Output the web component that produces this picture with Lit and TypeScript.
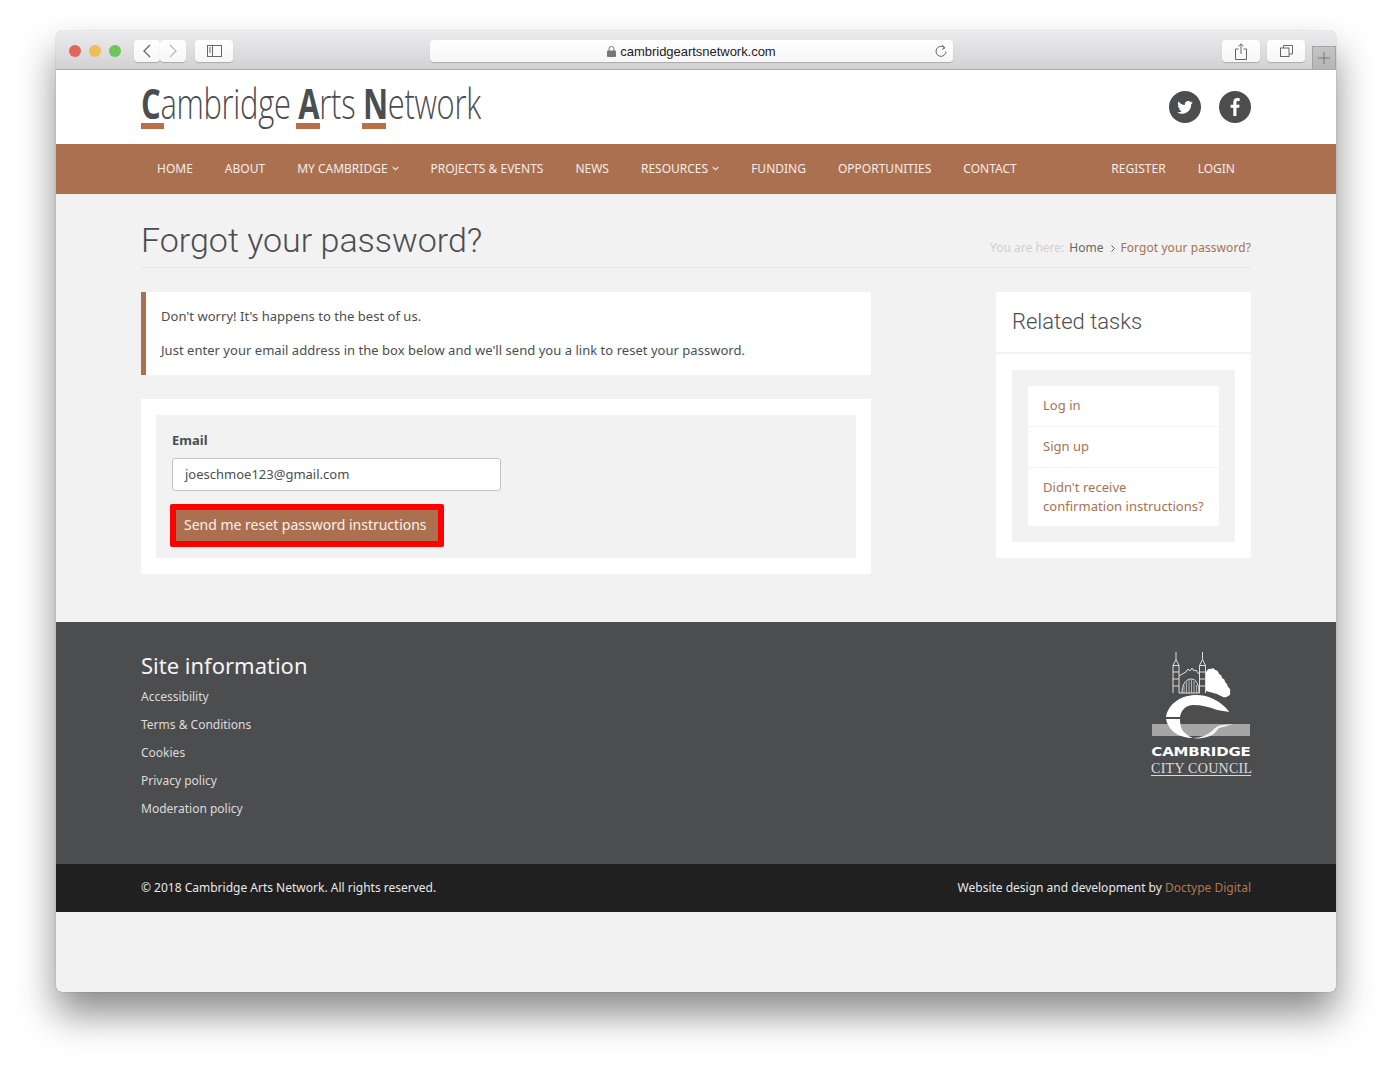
import { LitElement, html, css, svg } from "lit";
import { customElement } from "lit/decorators.js";

const logoMark = svg`
<svg class="council" width="100" height="124" viewBox="0 0 100 124">
  <g fill="none" stroke="#dedede" stroke-width="1">
    <path d="M22 41V13.500h6V41M48.500 41V13.500h6V41M22 13.500l3-6 3 6M48.500 13.500l3-6 3 6M25 7.500V0M51.500 7.500V0M22 20h6M22 27h6M22 34h6M48.500 20h6M48.500 27h6M48.500 34h6"/>
    <path d="M28 24l5-3 2-1 2-3 2 2 2-3 2 3 2-1 2 3 1.500 1M28 41h20.500"/>
    <path d="M31 41c0-8 3.500-14 9-14s8 6 8 14" />
    <path d="M33 41v-8M35.500 41v-11M38 41v-13M40.500 41v-13M43 41v-12M45.500 41v-8" stroke-width=".7"/>
  </g>
  <path fill="#fff" d="M55 20q2-4 5-3 3-2 4 1 3 0 4 4 3 1 3 4 3 1 3 4 3 2 3 5 3 2 2 5 1 3-2 4-2 2-5 1l-6-3-11-3z"/>
  <rect x="1" y="72" width="98" height="12" fill="#a6a6a6"/>
  <path fill="#fff" d="M78.300 60C70 49 58 43 45 43 30 43 17 52 15 65h14c1-7 6-12 13-12 9 0 17 2 24 5z"/>
  <path fill="#fff" d="M15 67h14c0 7 2 12 5 14 2 2 5 4 8 5C27 86 17 78 15 67z"/>
  <path fill="#f2f2f2" d="M42 86c8 0 14-3 19-7 3-4 7-6 11-6l10-1c-6 2-10 3-14 4-3 4-6 7-9 8-5 2-12 3-17 2z"/>
  <rect x="0" y="123" width="100" height="1" fill="#d8d8d8"/>
</svg>`;

@customElement("app-root")
export class AppRoot extends LitElement {
  static styles = css`
    :host { display: block; height: 1072px; box-sizing: border-box; padding: 31px 56px 80px; background: #fff; font-family: "Noto Sans", sans-serif; color: #4c4d4f; font-size: 13px; overflow: hidden; }
    * { box-sizing: border-box; }
    a { color: inherit; text-decoration: none; }
    .window { height: 961px; display: flex; flex-direction: column; background: #f2f2f2; border-radius: 6px; box-shadow: 0 22px 38px rgba(0,0,0,.46), 0 0 1px rgba(0,0,0,.5); }
    .bar { height: 39px; flex: none; display: flex; align-items: center; background: linear-gradient(#ececee, #d2d2d4); border-bottom: 1px solid #a9a9a9; border-radius: 6px 6px 0 0; padding: 2px 0 0 13px; position: relative; }
    .dots { display: flex; gap: 8px; width: 65px; }
    .dot { width: 12px; height: 12px; border-radius: 50%; }
    .btn { height: 22px; background: linear-gradient(#fff, #f6f6f6); border-radius: 4px; box-shadow: 0 1px 1px rgba(0,0,0,.2); display: flex; align-items: center; justify-content: center; }
    .nb { width: 26px; }
    .sb { width: 38px; margin-left: 9px; }
    .url { width: 523px; margin-left: 197px; position: relative; color: #222; font-size: 13px; gap: 4px; font-family: "Liberation Sans", sans-serif; letter-spacing: -.03px; }
    .url .reload { position: absolute; right: 5px; top: 4px; }
    .rightbtns { display: flex; gap: 7px; margin-left: 269px; }
    .rb { width: 38px; }
    .plus { position: absolute; right: 0; top: 15px; width: 24px; height: 23px; background: linear-gradient(#c4c4c6, #b5b5b7); border: 1px solid #a3a3a5; border-bottom: 0; display: flex; align-items: center; justify-content: center; }
    .wrap { width: 1110px; margin: 0 auto; }
    .head { height: 74px; flex: none; background: #fff; }
    .head .wrap { height: 100%; display: flex; justify-content: space-between; align-items: flex-start; }
    .logo { position: relative; height: 60px; width: 345px; margin-top: 7px; font-family: "Open Sans", sans-serif; font-weight: 300; font-size: 42px; line-height: 52px; color: #4c4d4f; white-space: nowrap; }
    .logo-text { display: inline-block; transform: scaleX(.736); transform-origin: 0 0; letter-spacing: -.4px; }
    .logo b { font-weight: 700; }
    .ul { position: absolute; top: 46px; height: 6px; background: #b96f47; }
    .social { display: flex; gap: 18px; margin-top: 21px; }
    .social span { width: 32px; height: 32px; border-radius: 50%; background: #4c4d4f; display: flex; align-items: center; justify-content: center; }
    nav { height: 50px; flex: none; background: #ab7050; }
    nav .wrap { display: flex; justify-content: space-between; height: 100%; padding-bottom: 2px; }
    .menu { display: flex; align-items: center; }
    .menu a { padding: 0 16px; color: #f6ece6; font-size: 12px; display: flex; align-items: center; gap: 4px; }
    main { flex: none; height: 428px; }
    .title { height: 74px; border-bottom: 1px solid #e6e6e6; display: flex; justify-content: space-between; align-items: flex-start; }
    h1 { margin: 24px 0 0; font-family: Roboto, sans-serif; font-weight: 300; font-size: 34px; line-height: 44px; color: #4c4d4f; }
    .crumbs { margin-top: 45px; font-size: 12px; line-height: 18px; display: flex; align-items: center; color: #cfcfcf; white-space: nowrap; }
    .crumbs .home { color: #666; margin-left: 5px; }
    .crumbs svg { margin: 1px 5px 0 8px; }
    .crumbs .cur { color: #ab7050; letter-spacing: .08px; }
    .cols { display: flex; justify-content: space-between; margin-top: 24px; align-items: flex-start; }
    .left { width: 730px; }
    .alert { height: 83px; background: #fff; border-left: 5px solid #ab7050; padding: 15px 15px 0; line-height: 18px; color: #4c4d4f; letter-spacing: .03px; }
    .alert p { margin: 0 0 16px; }
    .form { margin-top: 24px; background: #fff; padding: 16px 15px; height: 175px; }
    .inner { height: 143px; background: #f2f2f2; padding: 16px; display: flex; flex-direction: column; align-items: flex-start; }
    label { font-weight: 700; line-height: 18px; flex: none; }
    .field { margin-top: 9px; flex: none; width: 329px; height: 33px; background: #fff; border: 1px solid #c4c4c4; border-radius: 3px; padding: 0 12px 2px; display: flex; align-items: center; }
    .send { margin: 13px 0 0 -2px; flex: none; width: 274px; height: 43px; background: #ab7050; border: 6px solid #f00; border-radius: 2px; color: #f9f1ec; font-size: 14px; display: flex; align-items: center; padding: 0 0 2px 8px; white-space: nowrap; }
    .side { width: 255px; }
    .side-head { height: 60px; background: #fff; padding: 0 16px 2px; display: flex; align-items: center; font-family: Roboto, sans-serif; font-weight: 300; font-size: 22px; }
    .side-body { margin-top: 2px; background: #fff; padding: 16px; height: 204px; }
    .list { background: #f2f2f2; padding: 16px; height: 172px; display: flex; flex-direction: column; gap: 1px; }
    .list a { display: block; background: #fff; color: #ab7050; padding: 10px 15px 11px; line-height: 19px; letter-spacing: .03px; }
    .list a:last-child { padding: 10px 15px; }
    footer { height: 242px; flex: none; background: #4c4d4f; color: #e3e3e3; }
    footer .wrap { display: flex; justify-content: space-between; position: relative; }
    h2 { margin: 26px 0 0; font-size: 22px; font-weight: 400; line-height: 34px; color: #f4f4f4; }
    .links { display: flex; flex-direction: column; margin-top: 1px; }
    .links a { font-size: 12px; height: 28px; line-height: 28px; color: #dcdcdc; }
    .cc { width: 100px; margin-top: 30px; position: relative; height: 124px; }
    .cc .t1 { position: absolute; left: 0; top: 93.500px; width: 100px; font: 700 15px/13px "DejaVu Sans", sans-serif; color: #fff; white-space: nowrap; display: flex; justify-content: center; letter-spacing: -.2px; transform: scaleY(.85); }
    .cc .t2 { position: absolute; left: 0; top: 109px; width: 100px; font: 400 15px/14px "Liberation Serif", serif; color: #dcdcdc; white-space: nowrap; transform: scaleX(.935); transform-origin: 0 0; letter-spacing: .3px; }
    .council { display: block; }
    .copy { height: 48px; flex: none; background: #202020; color: #e8e8e8; font-size: 12px; }
    .copy .wrap { height: 100%; display: flex; justify-content: space-between; align-items: center; padding-bottom: 1px; }
    .copy a { color: #b5754f; }
    .rest { flex: 1; border-radius: 0 0 6px 6px; }
  `;

  render() {
    const chev = html`<svg width="7" height="5" viewBox="0 0 7 5"><path d="M.7 1l2.800 2.800L6.300 1" fill="none" stroke="#f6ece6" stroke-width="1.100"/></svg>`;
    return html`
      <div class="window">
        <div class="bar">
          <div class="dots">
            <div class="dot" style="background:#e2665c"></div>
            <div class="dot" style="background:#edbf56"></div>
            <div class="dot" style="background:#6fc45a"></div>
          </div>
          <div class="btn nb"><svg width="10" height="14" viewBox="0 0 10 14"><path d="M8 1L2 7l6 6" fill="none" stroke="#666" stroke-width="1.300"/></svg></div>
          <div class="btn nb"><svg width="10" height="14" viewBox="0 0 10 14"><path d="M2 1l6 6-6 6" fill="none" stroke="#bbb" stroke-width="1.300"/></svg></div>
          <div class="btn sb"><svg width="15" height="12" viewBox="0 0 15 12" fill="none" stroke="#666"><rect x=".5" y=".5" width="14" height="11"/><path d="M5.500 .5v11M2 3h2M2 5h2M2 7h2"/></svg></div>
          <div class="btn url">
            <svg width="9" height="11" viewBox="0 0 9 11"><rect x="0" y="4.500" width="9" height="6.500" rx="1" fill="#777"/><path d="M2 5V3a2.500 2.500 0 0 1 5 0v2" fill="none" stroke="#777"/></svg>
            <span>cambridgeartsnetwork.com</span>
            <svg class="reload" width="14" height="15" viewBox="0 0 14 15" fill="none" stroke="#666"><path d="M10.500 3.800A5 5 0 1 0 12 7.500"/><path d="M8 1l3 2.800L8 5.500" /></svg>
          </div>
          <div class="rightbtns">
            <div class="btn rb"><svg width="12" height="17" viewBox="0 0 12 17" fill="none" stroke="#666"><path d="M3.500 6H.5v10.500h11V6H8.500M6 11V1M3.500 3.300L6 .8l2.500 2.500"/></svg></div>
            <div class="btn rb"><svg width="13" height="12" viewBox="0 0 13 12" fill="none" stroke="#666"><rect x=".5" y="3" width="8.500" height="8.500"/><path d="M3.500 3V.5h9V9H9"/></svg></div>
          </div>
          <div class="plus"><svg width="12" height="12" viewBox="0 0 12 12"><path d="M6 0v12M0 6h12" stroke="#777" stroke-width="1"/></svg></div>
        </div>

        <div class="head">
          <div class="wrap">
            <div class="logo">
              <span class="logo-text"><b>C</b>ambridge <b>A</b>rts <b>N</b>etwork</span>
              <i class="ul" style="left:0;width:23px"></i>
              <i class="ul" style="left:155px;width:24px"></i>
              <i class="ul" style="left:221px;width:24px"></i>
            </div>
            <div class="social">
              <span><svg width="16" height="13" viewBox="0 0 24 20"><path fill="#fff" d="M24 2.400c-.9.400-1.800.700-2.800.8 1-.6 1.800-1.600 2.200-2.700-1 .6-2 1-3.100 1.200A4.900 4.900 0 0 0 11.900 6.200C7.800 6 4.200 4 1.700.9c-1.300 2.300-.6 5.100 1.500 6.600-.8 0-1.600-.2-2.200-.6 0 2.300 1.600 4.400 3.900 4.900-.7.200-1.500.2-2.200.1.600 2 2.400 3.400 4.600 3.400A9.900 9.900 0 0 1 0 17.300 14 14 0 0 0 21.500 4.900c1-.7 1.800-1.500 2.500-2.500z"/></svg></span>
              <span><svg width="10" height="18" viewBox="0 0 12 22"><path fill="#fff" d="M7.800 22V12h3.300l.5-3.900H7.800V5.600c0-1.100.3-1.900 1.900-1.900h2V.2C11.400.1 10.200 0 8.800 0 5.900 0 3.900 1.800 3.900 5.100v3H.6V12h3.300v10z"/></svg></span>
            </div>
          </div>
        </div>

        <nav>
          <div class="wrap">
            <div class="menu">
              <a>HOME</a><a>ABOUT</a><a>MY CAMBRIDGE ${chev}</a><a>PROJECTS &amp; EVENTS</a><a>NEWS</a><a>RESOURCES ${chev}</a><a>FUNDING</a><a>OPPORTUNITIES</a><a>CONTACT</a>
            </div>
            <div class="menu"><a>REGISTER</a><a>LOGIN</a></div>
          </div>
        </nav>

        <main>
          <div class="wrap">
            <div class="title">
              <h1>Forgot your password?</h1>
              <div class="crumbs">
                <span>You are here:</span><span class="home">Home</span>
                <svg width="4" height="7" viewBox="0 0 4 7"><path d="M.5.5l3 3-3 3" fill="none" stroke="#555"/></svg>
                <span class="cur">Forgot your password?</span>
              </div>
            </div>
            <div class="cols">
              <div class="left">
                <div class="alert">
                  <p>Don't worry! It's happens to the best of us.</p>
                  <p>Just enter your email address in the box below and we'll send you a link to reset your password.</p>
                </div>
                <div class="form">
                  <div class="inner">
                    <label>Email</label>
                    <div class="field">joeschmoe123@gmail.com</div>
                    <div class="send">Send me reset password instructions</div>
                  </div>
                </div>
              </div>
              <div class="side">
                <div class="side-head">Related tasks</div>
                <div class="side-body">
                  <div class="list">
                    <a>Log in</a><a>Sign up</a><a>Didn't receive confirmation instructions?</a>
                  </div>
                </div>
              </div>
            </div>
          </div>
        </main>

        <footer>
          <div class="wrap">
            <div>
              <h2>Site information</h2>
              <div class="links">
                <a>Accessibility</a><a>Terms &amp; Conditions</a><a>Cookies</a><a>Privacy policy</a><a>Moderation policy</a>
              </div>
            </div>
            <div class="cc">
              ${logoMark}
              <div class="t1">CAMBRIDGE</div>
              <div class="t2">CITY COUNCIL</div>
            </div>
          </div>
        </footer>

        <div class="copy">
          <div class="wrap">
            <span>© 2018 Cambridge Arts Network. All rights reserved.</span>
            <span>Website design and development by <a>Doctype Digital</a></span>
          </div>
        </div>
        <div class="rest"></div>
      </div>
    `;
  }
}
